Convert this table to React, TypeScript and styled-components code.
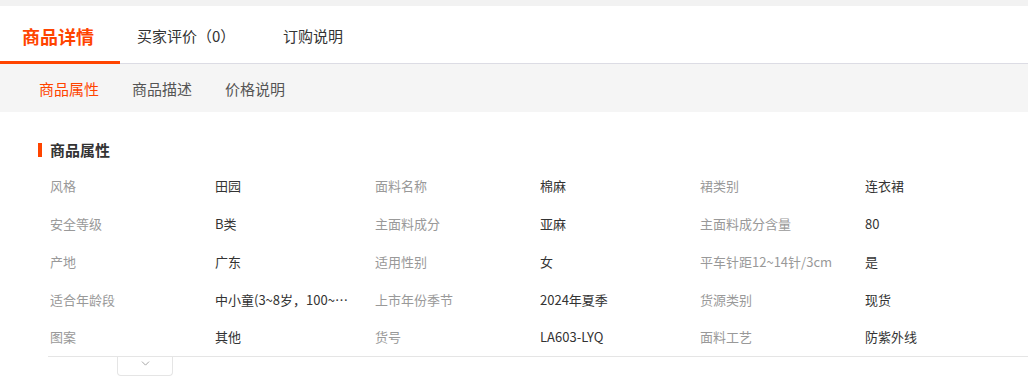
import styled, { createGlobalStyle } from "styled-components";
import { ChevronDown } from "lucide-react";

const GlobalStyle = createGlobalStyle`
  body {
    margin: 0;
    background: #f2f2f2;
    font-family: "Microsoft YaHei", "Noto Sans CJK SC", sans-serif;
    color: #333;
  }
`;

const props: [string, string][] = [
  ["风格", "田园"],
  ["面料名称", "棉麻"],
  ["裙类别", "连衣裙"],
  ["安全等级", "B类"],
  ["主面料成分", "亚麻"],
  ["主面料成分含量", "80"],
  ["产地", "广东"],
  ["适用性别", "女"],
  ["平车针距12~14针/3cm", "是"],
  ["适合年龄段", "中小童(3~8岁，100~130cm)"],
  ["上市年份季节", "2024年夏季"],
  ["货源类别", "现货"],
  ["图案", "其他"],
  ["货号", "LA603-LYQ"],
  ["面料工艺", "防紫外线"],
];

export default function App() {
  return (
    <>
      <GlobalStyle />
      <Page>
        <Panel>
          <TabBar>
            <Tab $active>商品详情</Tab>
            <Tab>买家评价（0）</Tab>
            <Tab>订购说明</Tab>
          </TabBar>
          <SubBar>
            <SubTab $active>商品属性</SubTab>
            <SubTab>商品描述</SubTab>
            <SubTab>价格说明</SubTab>
          </SubBar>
          <Section>
            <SectionTitle>商品属性</SectionTitle>
            <PropGrid>
              {props.map(([k, v]) => (
                <PropPair key={k}>
                  <PropLabel>{k}</PropLabel>
                  <PropValue title={v}>{v}</PropValue>
                </PropPair>
              ))}
            </PropGrid>
            <Footer>
              <ToggleButton>
                <ChevronDown size={13} strokeWidth={1.6} />
              </ToggleButton>
            </Footer>
          </Section>
        </Panel>
      </Page>
    </>
  );
}

const Page = styled.div`
  padding-top: 6px;
  min-height: 382px;
`;

const Panel = styled.div`
  background: #fff;
  min-height: 382px;
`;

const TabBar = styled.div`
  display: flex;
  height: 57px;
  border-bottom: 1px solid #dcdce4;
`;

const Tab = styled.div<{ $active?: boolean }>`
  display: flex;
  align-items: center;
  box-sizing: border-box;
  height: 58px;
  padding: ${(p) => (p.$active ? "4px 22px 0" : "4px 17px 0")};
  min-width: ${(p) => (p.$active ? "120px" : "146px")};
  font-size: ${(p) => (p.$active ? "18px" : "15px")};
  font-weight: ${(p) => (p.$active ? 700 : 400)};
  color: ${(p) => (p.$active ? "#ff4400" : "#333")};
  border-bottom: 3px solid ${(p) => (p.$active ? "#ff4400" : "transparent")};
  white-space: nowrap;
  cursor: pointer;
`;

const SubBar = styled.div`
  display: flex;
  align-items: center;
  gap: 33px;
  height: 48px;
  padding-left: 39px;
  box-sizing: border-box;
  background: #f5f5f5;
`;

const SubTab = styled.div<{ $active?: boolean }>`
  font-size: 15px;
  color: ${(p) => (p.$active ? "#ff4400" : "#555")};
  cursor: pointer;
`;

const Section = styled.div`
  padding: 28px 0 0 48px;
`;

const SectionTitle = styled.div`
  display: flex;
  align-items: center;
  margin-left: -10px;
  font-size: 15px;
  font-weight: 700;
  line-height: 20px;
  color: #333;

  &::before {
    content: "";
    width: 4px;
    height: 14px;
    margin-right: 8px;
    background: #ff4400;
  }
`;

const PropGrid = styled.div`
  display: grid;
  grid-template-columns: repeat(3, 325px);
  grid-auto-rows: 37.75px;
  padding: 7px 0 0 2px;
`;

const PropPair = styled.div`
  display: grid;
  grid-template-columns: 165px 160px;
  align-items: center;
  font-size: 13px;
`;

const PropLabel = styled.span`
  color: #999;
  white-space: nowrap;
`;

const PropValue = styled.span`
  color: #333;
  max-width: 136px;
  white-space: nowrap;
  overflow: hidden;
  text-overflow: ellipsis;
`;

const Footer = styled.div`
  border-top: 1px solid #e5e5e5;
  padding-left: 69px;
`;

const ToggleButton = styled.div`
  display: flex;
  justify-content: center;
  align-items: flex-start;
  box-sizing: border-box;
  width: 56px;
  height: 19px;
  border: 1px solid #e5e5e5;
  border-top: none;
  border-radius: 0 0 4px 4px;
  color: #999;
  cursor: pointer;
`;
